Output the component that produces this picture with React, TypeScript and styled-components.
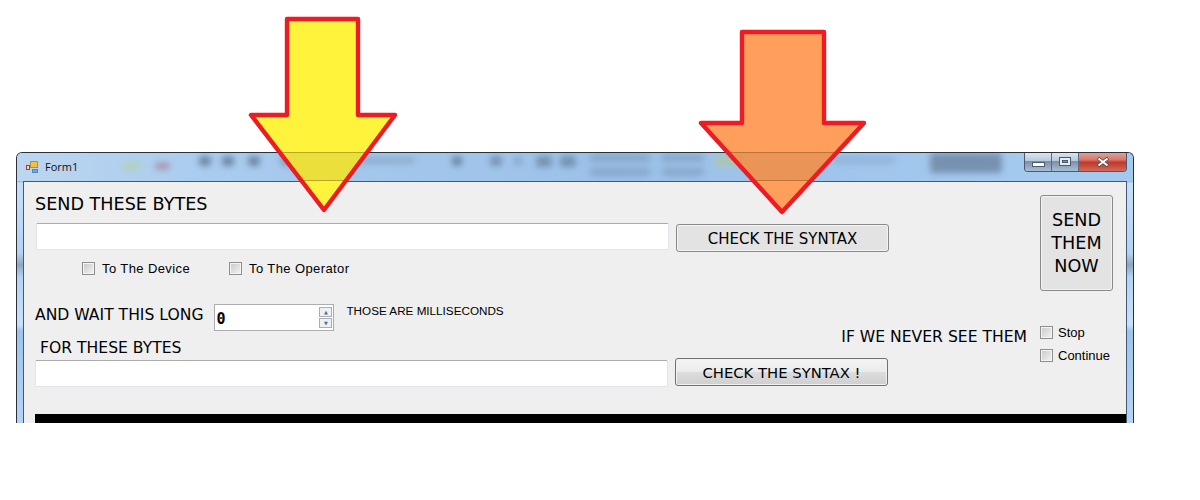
import React from "react";
import styled, { createGlobalStyle } from "styled-components";

const GlobalStyle = createGlobalStyle`
  html, body {
    margin: 0;
    background: #fff;
  }
  #root {
    width: 1200px;
    height: 500px;
    overflow: hidden;
  }
`;

// the desktop behind the glass title bar, only smudges are left of it
const blobs = [
  { gap: 44, top: 10, w: 18, h: 6, color: "#b5d29a" },
  { gap: 15, top: 10, w: 15, h: 6, color: "#a87c90" },
  { gap: 29, top: 3, w: 12, h: 10, color: "#5f7590" },
  { gap: 11, top: 3, w: 12, h: 10, color: "#5f7590" },
  { gap: 14, top: 3, w: 12, h: 10, color: "#5f7590" },
  { gap: 20, top: 3, w: 30, h: 10, color: "#7d99b8" },
  { gap: 35, top: 4, w: 70, h: 7, color: "#8aa8c8" },
  { gap: 37, top: 3, w: 10, h: 10, color: "#5f7590" },
  { gap: 28, top: 3, w: 12, h: 10, color: "#6d86a4" },
  { gap: 12, top: 4, w: 8, h: 8, color: "#7f9abb" },
  { gap: 14, top: 3, w: 16, h: 11, color: "#6d86a4" },
  { gap: 8, top: 3, w: 16, h: 11, color: "#6d86a4" },
  { gap: 14, top: 1, w: 60, h: 22, color: "#83a1c3", rows: true },
  { gap: 12, top: 1, w: 42, h: 22, color: "#83a1c3", rows: true },
  { gap: 11, top: 3, w: 40, h: 10, color: "#aec79f" },
  { gap: 78, top: 3, w: 62, h: 8, color: "#8fb0d4" },
  { gap: 35, top: 0, w: 72, h: 20, color: "#6d84a0" },
];

const App: React.FC = () => (
  <Page>
    <GlobalStyle />
    <Window>
      <TitleBar>
        <FormIcon viewBox="0 0 14 14">
          <rect x="5.5" y="1.5" width="7" height="6" fill="#f5c33b" stroke="#b98a3a" />
          <rect x="1.5" y="5.5" width="3" height="4" fill="#e4e0dc" stroke="#b1362b" />
          <rect x="7.5" y="9.5" width="5" height="3" fill="#6fa8e0" stroke="#5a86b5" />
        </FormIcon>
        <TitleText>Form1</TitleText>
        <BlurStrip>
          {blobs.map((b, i) => (
            <Blob
              key={i}
              $gap={b.gap}
              $top={b.top}
              $w={b.w}
              $h={b.h}
              $color={b.color}
              $rows={!!b.rows}
            />
          ))}
        </BlurStrip>
        <WindowControls>
          <MinButton>
            <MinGlyph />
          </MinButton>
          <MaxButton>
            <MaxGlyph />
          </MaxButton>
          <CloseButton>
            <svg width="14" height="10" viewBox="0 0 14 10">
              <path d="M2 1 L12 9 M12 1 L2 9" stroke="#4a4a50" strokeWidth="3.4" />
              <path d="M2.5 1.5 L11.5 8.5 M11.5 1.5 L2.5 8.5" stroke="#fff" strokeWidth="2" />
            </svg>
          </CloseButton>
        </WindowControls>
      </TitleBar>

      <Client>
        <TopRow>
          <TopLeft>
            <Heading>SEND THESE BYTES</Heading>
            <InputRow>
              <TextBox $width={633} />
              <FlatButton>CHECK THE SYNTAX</FlatButton>
            </InputRow>
            <CheckRow>
              <CheckItem>
                <Box />
                <CheckLabel>To The Device</CheckLabel>
              </CheckItem>
              <CheckItem>
                <Box />
                <CheckLabel>To The Operator</CheckLabel>
              </CheckItem>
            </CheckRow>
          </TopLeft>
          <SendButton>
            SEND
            <br />
            THEM
            <br />
            NOW
          </SendButton>
        </TopRow>

        <MiddleRow>
          <MiddleLeft>
            <UpperRow>
              <div>
                <WaitRow>
                  <WaitLabel>AND WAIT THIS LONG</WaitLabel>
                  <Spinner>
                    <SpinnerValue>0</SpinnerValue>
                    <SpinnerArrows>
                      <SpinnerArrow>▲</SpinnerArrow>
                      <SpinnerArrow>▼</SpinnerArrow>
                    </SpinnerArrows>
                  </Spinner>
                  <Note>THOSE ARE MILLISECONDS</Note>
                </WaitRow>
                <BytesLabel>FOR THESE BYTES</BytesLabel>
              </div>
              <IfLabel>IF WE NEVER SEE THEM</IfLabel>
            </UpperRow>
            <SecondInputRow>
              <TextBox $width={633} />
              <ShadedButton>CHECK THE SYNTAX !</ShadedButton>
            </SecondInputRow>
          </MiddleLeft>
          <SideChecks>
            <CheckItem>
              <Box />
              <SideLabel>Stop</SideLabel>
            </CheckItem>
            <CheckItem>
              <Box />
              <SideLabel>Continue</SideLabel>
            </CheckItem>
          </SideChecks>
        </MiddleRow>

        <BlackBar />
      </Client>
    </Window>

    <Arrow
      points="287,19 358,19 358,115 395,115 324,210 251,115 287,115"
      band="153,180"
      fill="#fff33b"
      id="yellow"
    />
    <Arrow
      points="742,32 824,32 824,123 864,123 782,212 701,123 742,123"
      band="153,180"
      fill="#ff9f5b"
      id="orange"
    />
  </Page>
);

export default App;

interface ArrowProps {
  points: string;
  band: string;
  fill: string;
  id: string;
}

// the arrows were pasted over the shot, the title bar still shows through a bit
const Arrow: React.FC<ArrowProps> = ({ points, band, fill, id }) => {
  const [top, bottom] = band.split(",").map(Number);
  return (
    <ArrowSvg viewBox="0 0 1200 500">
      <defs>
        <clipPath id={id}>
          <polygon points={points} />
        </clipPath>
      </defs>
      <polygon points={points} fill={fill} />
      <g clipPath={`url(#${id})`}>
        <rect x="0" y={top} width="1200" height={bottom - top} fill="rgba(60,60,60,0.1)" />
        <rect x="0" y={top - 1} width="1200" height="1" fill="rgba(90,50,0,0.4)" />
        <rect x="0" y={bottom} width="1200" height="1" fill="rgba(90,50,0,0.4)" />
      </g>
      <polygon
        points={points}
        fill="none"
        stroke="#ed1c24"
        strokeWidth="4.4"
        strokeLinejoin="round"
      />
    </ArrowSvg>
  );
};

const Page = styled.div`
  position: relative;
  width: 1200px;
  height: 500px;
  padding: 152px 0 0 16px;
  box-sizing: border-box;
  background: #fff;
`;

const ArrowSvg = styled.svg`
  position: absolute;
  left: 0;
  top: 0;
  width: 1200px;
  height: 500px;
  pointer-events: none;
`;

const Window = styled.div`
  width: 1118px;
  height: 271px;
  box-sizing: border-box;
  display: flex;
  flex-direction: column;
  padding: 0 6px;
  overflow: hidden;
  border: 1px solid #2b3038;
  border-bottom: none;
  border-radius: 6px 6px 0 0;
  background: linear-gradient(
    180deg,
    #a9cbee 0,
    #9cc1e8 29px,
    #c6defa 30px,
    #b4d2f4 100px,
    #8fa6bf 112px,
    #b4d2f4 124px,
    #c9e0fb 172px,
    #9dc3ee 178px,
    #b5d4f6 271px
  );
`;

const TitleBar = styled.div`
  height: 28px;
  flex: none;
  display: flex;
  align-items: flex-start;
  background: linear-gradient(90deg, #bcd6f0 0, #a8cbee 200px, #9cc1e8 600px, #a4c9ef 1000px);
  margin: 0 -6px;
  padding: 0 6px;
`;

const FormIcon = styled.svg`
  width: 14px;
  height: 14px;
  flex: none;
  margin: 7px 0 0 2px;
`;

const TitleText = styled.span`
  font-family: "Open Sans", sans-serif;
  font-size: 11px;
  line-height: 14px;
  color: #111;
  margin: 7px 0 0 6px;
`;

const BlurStrip = styled.div`
  flex: 1;
  min-width: 0;
  display: flex;
  align-items: flex-start;
  overflow: hidden;
  height: 28px;
`;

const Blob = styled.div<{
  $gap: number;
  $top: number;
  $w: number;
  $h: number;
  $color: string;
  $rows: boolean;
}>`
  flex: none;
  margin-left: ${(p) => p.$gap}px;
  margin-top: ${(p) => p.$top}px;
  width: ${(p) => p.$w}px;
  height: ${(p) => p.$h}px;
  border-radius: 4px;
  background: ${(p) =>
    p.$rows
      ? `linear-gradient(180deg, ${p.$color} 0 8px, transparent 8px 14px, ${p.$color} 14px)`
      : p.$color};
  opacity: 0.8;
  filter: blur(3px);
`;

const WindowControls = styled.div`
  flex: none;
  display: flex;
  height: 20px;
  margin-top: -1px;
  border: 1px solid #4a5a6e;
  border-top: none;
  border-radius: 0 0 4px 4px;
  overflow: hidden;
  box-sizing: border-box;
`;

const MinButton = styled.div`
  width: 26px;
  display: flex;
  align-items: center;
  justify-content: center;
  border-right: 1px solid #5a6a80;
  background: linear-gradient(180deg, #dfe8f2 0, #b9c9dc 45%, #7d90a8 50%, #a9bdd3 100%);
`;

const MaxButton = styled(MinButton)``;

const CloseButton = styled.div`
  width: 47px;
  display: flex;
  align-items: center;
  justify-content: center;
  background: linear-gradient(180deg, #e0a59c 0, #d9796b 40%, #c0392b 55%, #d2695a 100%);
`;

const MinGlyph = styled.div`
  width: 11px;
  height: 3px;
  margin-top: 5px;
  background: #fff;
  border: 1px solid #4a5a70;
`;

const MaxGlyph = styled.div`
  width: 6px;
  height: 3px;
  background: transparent;
  border: 2px solid #e4ebf3;
  outline: 1px solid #4a5a70;
  box-shadow: inset 0 0 0 1px #4a5a70;
`;

const Client = styled.div`
  flex: 1;
  min-height: 0;
  display: flex;
  flex-direction: column;
  box-sizing: border-box;
  padding-left: 11px;
  border: 1px solid #45586e;
  border-bottom: none;
  background: #efefef;
`;

const TopRow = styled.div`
  flex: none;
  height: 96px;
  margin-top: 13px;
  display: flex;
  justify-content: space-between;
  padding-right: 13px;
`;

const TopLeft = styled.div`
  display: flex;
  flex-direction: column;
`;

const Heading = styled.div`
  font-family: "DejaVu Sans", sans-serif;
  font-size: 17.6px;
  line-height: 20px;
  margin-top: -1px;
  color: #000;
`;

const InputRow = styled.div`
  display: flex;
  align-items: flex-start;
  gap: 7px;
  margin: 9px 0 0 1px;
`;

const SecondInputRow = styled(InputRow)`
  align-items: flex-start;
  margin: 2px 0 0;
`;

const TextBox = styled.div<{ $width: number }>`
  width: ${(p) => p.$width}px;
  height: 27px;
  box-sizing: border-box;
  background: #fff;
  border: 1px solid #e2e3ea;
  border-top-color: #ababab;
  border-radius: 2px;
`;

const FlatButton = styled.div`
  width: 213px;
  height: 28px;
  margin-top: 1px;
  padding-top: 1px;
  box-sizing: border-box;
  display: flex;
  align-items: center;
  justify-content: center;
  font-family: "DejaVu Sans", sans-serif;
  font-size: 15px;
  color: #000;
  background: #e3e3e3;
  border: 1px solid #8a8a8a;
  border-radius: 3px;
  box-shadow: inset 0 0 0 1px #f2f2f2;
`;

const ShadedButton = styled(FlatButton)`
  margin-top: -2px;
  padding-top: 0;
  font-size: 14.8px;
  background: linear-gradient(180deg, #f4f4f4 0, #ebebeb 48%, #dcdcdc 52%, #cfcfcf 100%);
  border-color: #707070;
`;

const SendButton = styled(FlatButton)`
  width: 73px;
  height: 96px;
  margin-top: 0;
  padding-top: 0;
  font-size: 17.6px;
  line-height: 23px;
  text-align: center;
`;

const CheckRow = styled.div`
  display: flex;
  gap: 39px;
  margin: 9px 0 0 47px;
`;

const CheckItem = styled.div`
  display: flex;
  align-items: center;
  height: 14px;
`;

const Box = styled.div`
  width: 13px;
  height: 13px;
  flex: none;
  box-sizing: border-box;
  border: 1px solid #8e8f8f;
  background: linear-gradient(135deg, #c9c9c9 0, #f3f3f3 100%);
  box-shadow: inset 0 0 0 1px #f4f4f4;
`;

const CheckLabel = styled.span`
  font-family: "Liberation Sans", sans-serif;
  font-size: 13px;
  letter-spacing: 0.4px;
  color: #000;
  margin-left: 7px;
`;

const SideLabel = styled(CheckLabel)`
  margin-left: 5px;
  letter-spacing: 0;
`;

const MiddleRow = styled.div`
  flex: none;
  height: 123px;
  display: flex;
`;

const MiddleLeft = styled.div`
  width: 992px;
  flex: none;
  display: flex;
  flex-direction: column;
`;

const UpperRow = styled.div`
  display: flex;
  justify-content: space-between;
  align-items: flex-start;
  padding-top: 13px;
`;

const WaitRow = styled.div`
  display: flex;
  align-items: flex-start;
`;

const FormLabel = styled.span`
  font-family: "DejaVu Sans", sans-serif;
  font-size: 15.6px;
  line-height: 20px;
  color: #000;
`;

const WaitLabel = styled(FormLabel)`
  margin-top: 1px;
`;

const Spinner = styled.div`
  width: 120px;
  height: 27px;
  box-sizing: border-box;
  margin-left: 11px;
  display: flex;
  justify-content: space-between;
  align-items: center;
  padding: 0 1px 0 1px;
  background: #fff;
  border: 1px solid #abadb3;
`;

const SpinnerValue = styled.span`
  font-family: "DejaVu Sans Mono", monospace;
  font-weight: 700;
  font-size: 15px;
  line-height: 16px;
  color: #000;
  margin-top: 2px;
`;

const SpinnerArrows = styled.div`
  display: flex;
  flex-direction: column;
  gap: 1px;
`;

const SpinnerArrow = styled.div`
  width: 13px;
  height: 10px;
  box-sizing: border-box;
  display: flex;
  align-items: center;
  justify-content: center;
  font-family: "DejaVu Sans", sans-serif;
  font-size: 5px;
  color: #51708f;
  background: #eef0f2;
  border: 1px solid #aaaeb4;
`;

const Note = styled.span`
  font-family: "Liberation Sans", sans-serif;
  font-size: 11.7px;
  line-height: 14px;
  color: #000;
  margin-left: 12px;
`;

const BytesLabel = styled(FormLabel)`
  display: block;
  margin: 7px 0 0 5px;
`;

const IfLabel = styled(FormLabel)`
  margin-top: 23px;
`;

const SideChecks = styled.div`
  display: flex;
  flex-direction: column;
  gap: 9px;
  margin-left: 13px;
  padding-top: 34px;
`;

const BlackBar = styled.div`
  height: 9px;
  flex: none;
  background: #000;
`;
